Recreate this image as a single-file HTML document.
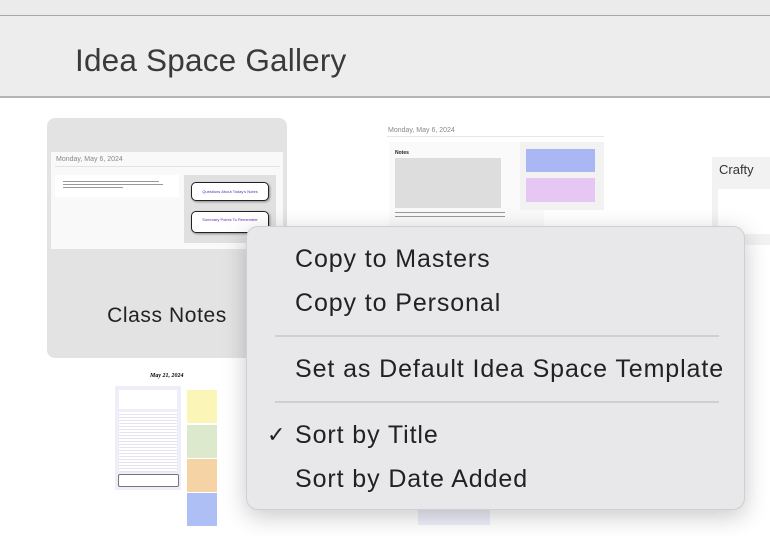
<!DOCTYPE html>
<html><head><style>
body{margin:0;width:770px;height:536px;overflow:hidden;background:#fff;font-family:"Liberation Sans",sans-serif;position:relative}
.a{position:absolute}
.menu div.t{position:absolute;left:48px;font-size:25px;letter-spacing:0.9px;color:#222;white-space:nowrap;line-height:28px}
</style></head><body>
<div class="a" style="left:0;top:0;width:770px;height:15px;background:#ebebeb;border-bottom:1px solid #a8a8a8"></div>
<div class="a" style="left:0;top:16px;width:770px;height:80px;background:#ededee;border-bottom:2px solid #b5b5b5"></div>
<div class="a" style="left:75px;top:42px;font-size:31.5px;letter-spacing:0.2px;color:#3a3a3a">Idea Space Gallery</div>

<!-- Class Notes card -->
<div class="a" style="left:47px;top:118px;width:240px;height:240px;background:#e3e3e3;border-radius:8px"></div>
<div class="a" style="left:51px;top:152px;width:232px;height:97px;background:#f9f9f9"></div>
<div class="a" style="left:56px;top:156px;font-size:7px;color:#888">Monday, May 6, 2024</div>
<div class="a" style="left:55px;top:166px;width:225px;height:1px;background:#e2e2e2"></div>
<div class="a" style="left:55px;top:175px;width:124px;height:22px;background:#fff"></div>
<div class="a" style="left:63px;top:181px;width:96px;height:1px;background:#999"></div>
<div class="a" style="left:63px;top:184px;width:100px;height:1px;background:#999"></div>
<div class="a" style="left:63px;top:187px;width:60px;height:1px;background:#999"></div>
<div class="a" style="left:184px;top:175px;width:92px;height:68px;background:#e0e0e0"></div>
<div class="a" style="left:191px;top:182px;width:76px;height:17px;border:1.5px solid #222;border-radius:5px;background:#fff;font-size:4px;color:#5b2bb5;text-align:center;line-height:17px;box-shadow:1px 1px 2px #888">Questions About Today's Notes</div>
<div class="a" style="left:191px;top:211px;width:76px;height:20px;border:1.5px solid #222;border-radius:5px;background:#fff;font-size:4px;color:#5b2bb5;text-align:center;line-height:16px;box-shadow:1px 1px 2px #888">Summary Points To Remember</div>
<div class="a" style="left:47px;top:304px;width:240px;text-align:center;font-size:21px;letter-spacing:0.6px;color:#222">Class Notes</div>

<!-- second thumb -->
<div class="a" style="left:388px;top:127px;font-size:7px;color:#888">Monday, May 6, 2024</div>
<div class="a" style="left:387px;top:136px;width:217px;height:1px;background:#e6e6e6"></div>
<div class="a" style="left:389px;top:142px;width:155px;height:90px;background:#fafafa"></div>
<div class="a" style="left:395px;top:150px;font-size:5px;font-weight:bold;color:#222">Notes</div>
<div class="a" style="left:395px;top:158px;width:106px;height:50px;background:#ddd"></div>
<div class="a" style="left:395px;top:212px;width:110px;height:1px;background:#999"></div>
<div class="a" style="left:395px;top:216px;width:110px;height:1px;background:#999"></div>
<div class="a" style="left:520px;top:142px;width:84px;height:68px;background:#f2f2f2"></div>
<div class="a" style="left:526px;top:149px;width:69px;height:23px;background:#a9b8f5"></div>
<div class="a" style="left:526px;top:178px;width:69px;height:24px;background:#e6c6f3"></div>

<!-- Crafty -->
<div class="a" style="left:712px;top:157px;width:58px;height:88px;background:#f2f2f2"></div>
<div class="a" style="left:719px;top:162px;font-size:13px;color:#333">Crafty</div>
<div class="a" style="left:718px;top:189px;width:52px;height:45px;background:#fff"></div>

<!-- third thumb -->
<div class="a" style="left:150px;top:373px;font-size:6px;font-style:italic;font-weight:bold;font-family:'Liberation Serif',serif">May 21, 2024</div>
<div class="a" style="left:115px;top:386px;width:66px;height:104px;background:#eeeefa"></div>
<div class="a" style="left:119px;top:390px;width:58px;height:19px;background:#fff"></div>
<div class="a" style="left:119px;top:412px;width:58px;height:60px;background:repeating-linear-gradient(#fff 0 2px,#e4e4ee 2px 3px)"></div>
<div class="a" style="left:118px;top:474px;width:59px;height:11px;background:#fff;border:1px solid #777;border-radius:2px"></div>
<div class="a" style="left:187px;top:390px;width:30px;height:33px;background:#fbf5b8"></div>
<div class="a" style="left:187px;top:425px;width:30px;height:33px;background:#dde9cc"></div>
<div class="a" style="left:187px;top:459px;width:30px;height:33px;background:#f6d3a5"></div>
<div class="a" style="left:187px;top:493px;width:30px;height:33px;background:#aebff5"></div>
<div class="a" style="left:418px;top:505px;width:72px;height:20px;background:#eeeefa"></div>

<!-- menu -->
<div class="a menu" style="left:246px;top:226px;width:499px;height:284px;background:#e8e8eb;border-radius:12px;border:1px solid #d0d0d3;box-sizing:border-box;box-shadow:0 6px 24px rgba(0,0,0,.22)">
<div class="t" style="top:18px">Copy to Masters</div>
<div class="t" style="top:62px">Copy to Personal</div>
<div class="a" style="left:28px;top:108px;width:444px;height:2px;background:#cfcfd2"></div>
<div class="t" style="top:128px">Set as Default Idea Space Template</div>
<div class="a" style="left:28px;top:174px;width:444px;height:2px;background:#cfcfd2"></div>
<div class="t" style="top:194px;left:20px;font-size:22px">✓</div>
<div class="t" style="top:194px">Sort by Title</div>
<div class="t" style="top:238px">Sort by Date Added</div>
</div>
</body></html>
